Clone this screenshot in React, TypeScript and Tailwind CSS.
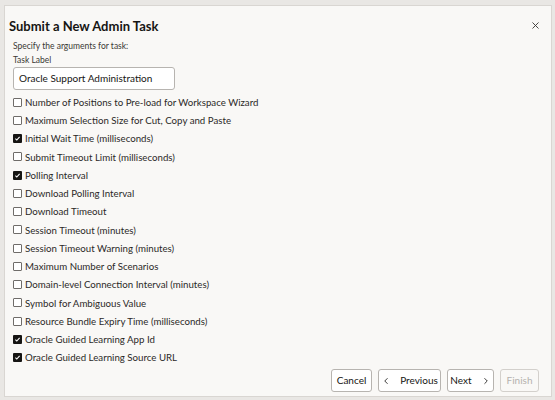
import { ChevronLeft, ChevronRight, X } from "lucide-react";

type Arg = { label: string; checked: boolean };

const args: Arg[] = [
  { label: "Number of Positions to Pre-load for Workspace Wizard", checked: false },
  { label: "Maximum Selection Size for Cut, Copy and Paste", checked: false },
  { label: "Initial Wait Time (milliseconds)", checked: true },
  { label: "Submit Timeout Limit (milliseconds)", checked: false },
  { label: "Polling Interval", checked: true },
  { label: "Download Polling Interval", checked: false },
  { label: "Download Timeout", checked: false },
  { label: "Session Timeout (minutes)", checked: false },
  { label: "Session Timeout Warning (minutes)", checked: false },
  { label: "Maximum Number of Scenarios", checked: false },
  { label: "Domain-level Connection Interval (minutes)", checked: false },
  { label: "Symbol for Ambiguous Value", checked: false },
  { label: "Resource Bundle Expiry Time (milliseconds)", checked: false },
  { label: "Oracle Guided Learning App Id", checked: true },
  { label: "Oracle Guided Learning Source URL", checked: true },
];

function Box({ checked }: { checked: boolean }) {
  if (checked) {
    return (
      <span className="flex h-[9px] w-[9px] shrink-0 items-center justify-center rounded-[1px] bg-[#161513]">
        <svg viewBox="0 0 10 10" className="h-[7px] w-[7px]">
          <path d="M2 5.2l2 2 4-4.4" fill="none" stroke="#fff" strokeWidth="1.6" />
        </svg>
      </span>
    );
  }
  return <span className="h-[9px] w-[9px] shrink-0 rounded-[1px] border border-[#6f6c69] bg-white" />;
}

const btn =
  "flex h-[23px] items-center justify-center rounded-[3px] border border-[#b7b4b0] bg-white text-[10px] text-[#161513]";

export default function App() {
  return (
    <div className="h-[400px] w-[555px] overflow-hidden bg-[#e9e7e4] pt-[5px] pl-[4px] font-['Lato',sans-serif]">
      <div className="flex h-[392px] w-[548px] flex-col border border-[#d9d6d2] bg-[#f9f8f6] text-[#161513]">
        <div className="flex h-[30px] items-end justify-between pl-[4px] pr-[10px]">
          <h1 className="text-[13px] font-bold leading-[20px]">Submit a New Admin Task</h1>
          <X className="mb-[5px] h-[11px] w-[11px] text-[#3a3835]" strokeWidth={2} />
        </div>

        <div className="mt-[4px] pl-[8px] text-[8.5px] leading-[12px] text-[#3a3835]">Specify the arguments for task:</div>
        <div className="mt-[2px] pl-[8px] text-[8.5px] leading-[12px] text-[#3a3835]">Task Label</div>
        <div className="ml-[8px] mt-[1px] flex h-[23px] w-[162px] items-center whitespace-nowrap rounded-[3px] border border-[#b7b4b0] bg-white px-[5px] text-[10px] text-[#161513]">
          Oracle Support Administration
        </div>

        <ul className="mt-[3px] flex flex-col pl-[8px]">
          {args.map((a) => (
            <li key={a.label} className="flex h-[18.25px] items-center gap-[3px] whitespace-nowrap text-[9.7px] text-[#2b2927]">
              <Box checked={a.checked} />
              <span>{a.label}</span>
            </li>
          ))}
        </ul>

        <div className="mt-auto mb-[4px] flex justify-end gap-[6px] pr-[12px]">
          <button className={`${btn} w-[41px]`}>Cancel</button>
          <button className={`${btn} w-[63px] gap-[9px]`}>
            <ChevronLeft className="h-[10px] w-[10px]" strokeWidth={2} />
            Previous
          </button>
          <button className={`${btn} w-[47px] gap-[9px]`}>
            Next
            <ChevronRight className="h-[10px] w-[10px]" strokeWidth={2} />
          </button>
          <button className="flex h-[23px] w-[39px] items-center justify-center rounded-[3px] border border-[#d3d0cc] bg-[#f9f8f6] text-[10px] text-[#b5b2ae]">
            Finish
          </button>
        </div>
      </div>
    </div>
  );
}
